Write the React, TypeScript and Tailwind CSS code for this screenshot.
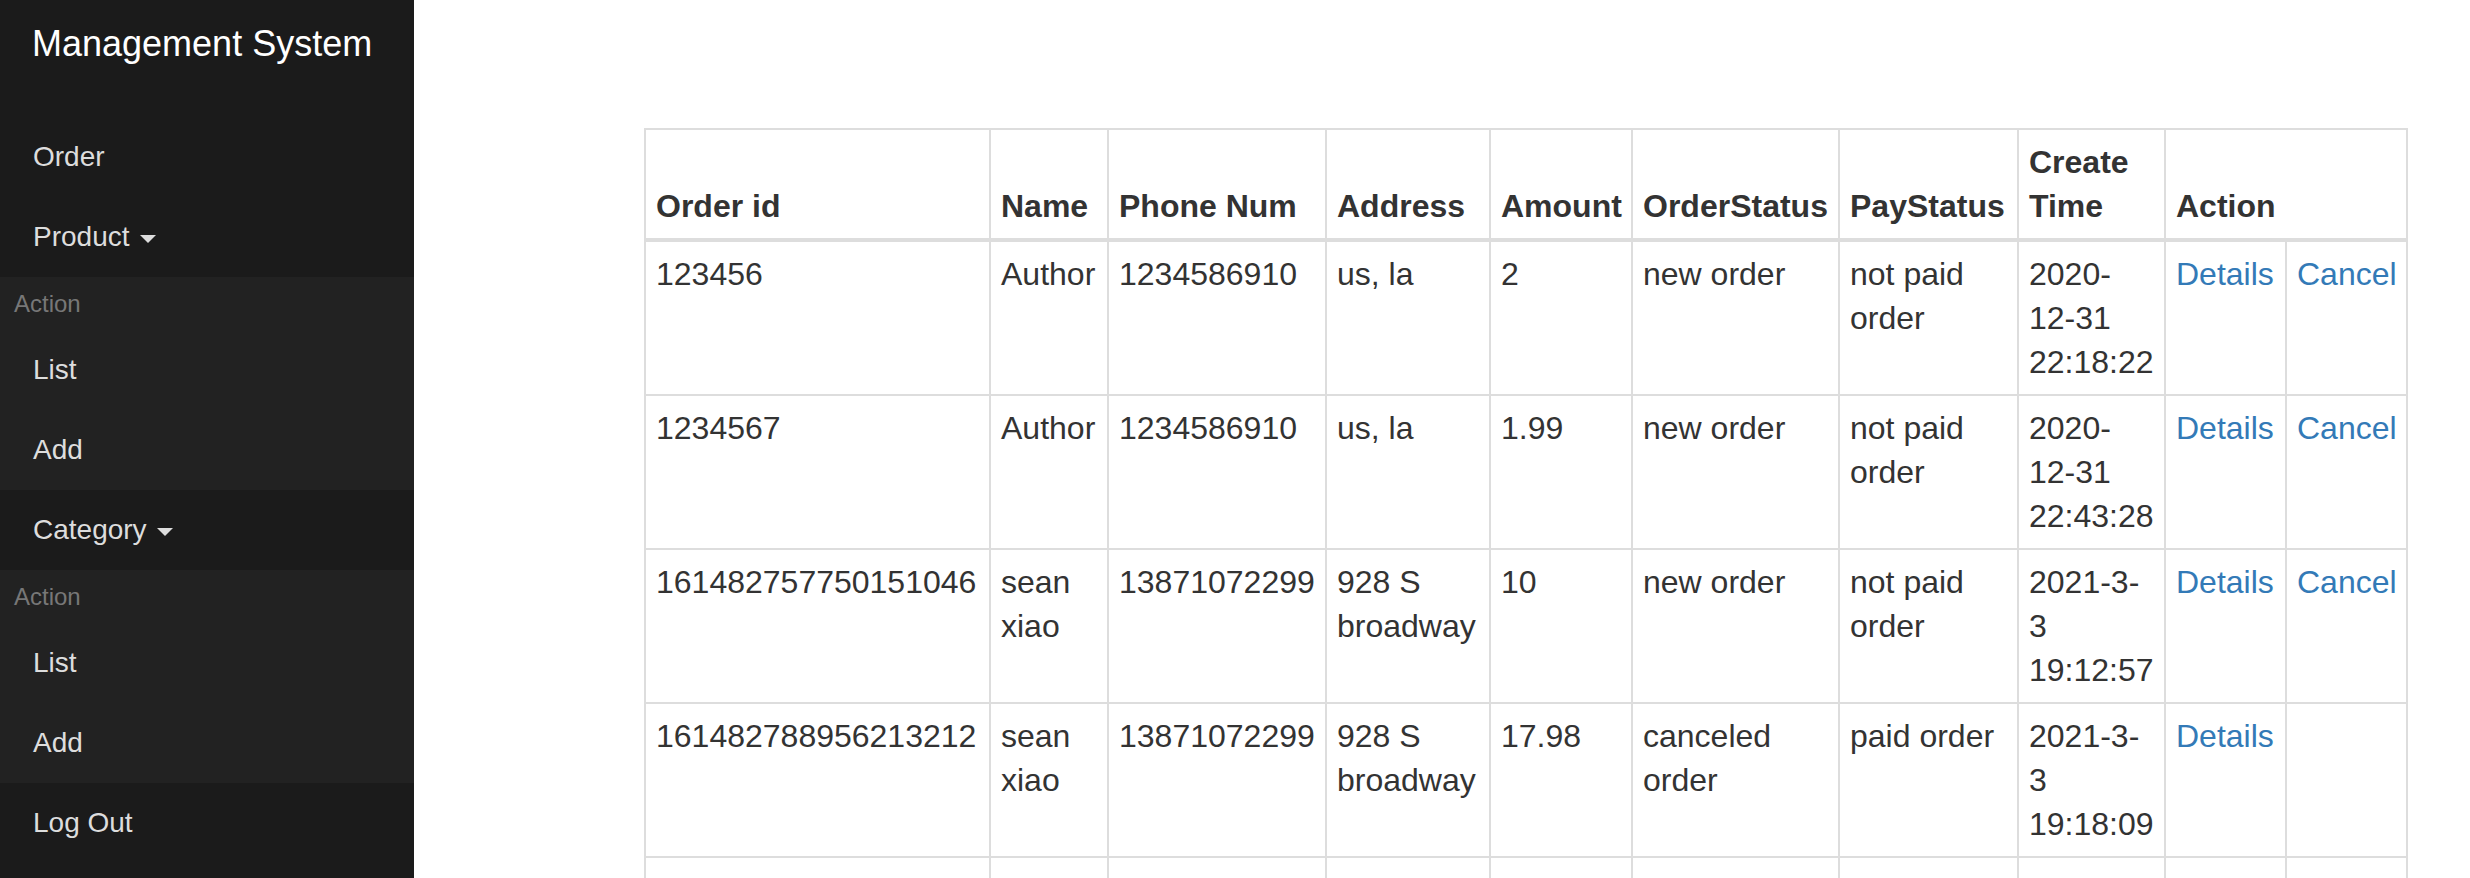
import React from "react";

type Order = {
  id: string;
  name: string;
  phone: string;
  address: string;
  amount: string;
  orderStatus: string;
  payStatus: string;
  time: string[];
  canCancel: boolean;
};

const orders: Order[] = [
  {
    id: "123456",
    name: "Author",
    phone: "1234586910",
    address: "us, la",
    amount: "2",
    orderStatus: "new order",
    payStatus: "not paid order",
    time: ["2020-", "12-31", "22:18:22"],
    canCancel: true,
  },
  {
    id: "1234567",
    name: "Author",
    phone: "1234586910",
    address: "us, la",
    amount: "1.99",
    orderStatus: "new order",
    payStatus: "not paid order",
    time: ["2020-", "12-31", "22:43:28"],
    canCancel: true,
  },
  {
    id: "161482757750151046",
    name: "sean xiao",
    phone: "13871072299",
    address: "928 S broadway",
    amount: "10",
    orderStatus: "new order",
    payStatus: "not paid order",
    time: ["2021-3-", "3", "19:12:57"],
    canCancel: true,
  },
  {
    id: "161482788956213212",
    name: "sean xiao",
    phone: "13871072299",
    address: "928 S broadway",
    amount: "17.98",
    orderStatus: "canceled order",
    payStatus: "paid order",
    time: ["2021-3-", "3", "19:18:09"],
    canCancel: false,
  },
  {
    id: "161482801270334518",
    name: "sean xiao",
    phone: "13871072299",
    address: "928 S broadway",
    amount: "8.99",
    orderStatus: "new order",
    payStatus: "not paid order",
    time: ["2021-3-", "3", "19:20:11"],
    canCancel: true,
  },
];

const colWidths = [345, 118, 218, 164, 142, 207, 179, 147, 121, 121];

function Caret() {
  return (
    <span className="ml-[10px] inline-block h-0 w-0 border-x-[8px] border-t-[8px] border-x-transparent border-t-[#dddddd] align-middle" />
  );
}

function NavItem({ children }: { children: React.ReactNode }) {
  return (
    <li>
      <a className="block py-[20px] pl-[33px] text-[28px] leading-[40px] text-[#dddddd]">
        {children}
      </a>
    </li>
  );
}

function Dropdown() {
  return (
    <ul className="bg-[#222222]">
      <li className="pb-[9px] pl-[14px] pt-[10px] text-[24px] leading-[34px] text-[#777777]">
        Action
      </li>
      <NavItem>List</NavItem>
      <NavItem>Add</NavItem>
    </ul>
  );
}

function Sidebar() {
  return (
    <aside className="h-full w-[414px] shrink-0 bg-[#1b1b1b]">
      <div className="h-[117px] pl-[32px] pt-[24px] text-[36px] leading-[40px] text-white">
        Management System
      </div>
      <ul>
        <NavItem>Order</NavItem>
        <NavItem>
          Product
          <Caret />
        </NavItem>
        <li>
          <Dropdown />
        </li>
        <NavItem>
          Category
          <Caret />
        </NavItem>
        <li>
          <Dropdown />
        </li>
        <NavItem>Log Out</NavItem>
      </ul>
    </aside>
  );
}

const th = "border-2 border-b-4 border-[#dddddd] px-[10px] py-[10px] text-left align-bottom font-bold";
const td = "border-2 border-[#dddddd] px-[10px] py-[10px] align-top";

export default function App() {
  return (
    <div className="flex h-[878px] overflow-hidden bg-white font-['Liberation_Sans',Arial,sans-serif]">
      <Sidebar />
      <main className="flex-1 pl-[230px] pt-[128px]">
        <table className="w-[1764px] table-fixed border-collapse text-[32px] leading-[44px] text-[#333333]">
          <colgroup>
            {colWidths.map((w, i) => (
              <col key={i} style={{ width: w }} />
            ))}
          </colgroup>
          <thead>
            <tr>
              <th className={th}>Order id</th>
              <th className={th}>Name</th>
              <th className={th}>Phone Num</th>
              <th className={th}>Address</th>
              <th className={th}>Amount</th>
              <th className={th}>OrderStatus</th>
              <th className={th}>PayStatus</th>
              <th className={th}>Create Time</th>
              <th className={th} colSpan={2}>
                Action
              </th>
            </tr>
          </thead>
          <tbody>
            {orders.map((o) => (
              <tr key={o.id}>
                <td className={td}>{o.id}</td>
                <td className={td}>{o.name}</td>
                <td className={td}>{o.phone}</td>
                <td className={td}>{o.address}</td>
                <td className={td}>{o.amount}</td>
                <td className={td}>{o.orderStatus}</td>
                <td className={td}>{o.payStatus}</td>
                <td className={td}>
                  {o.time.map((line, i) => (
                    <div key={i}>{line}</div>
                  ))}
                </td>
                <td className={td}>
                  <a className="text-[#337ab7]">Details</a>
                </td>
                <td className={td}>
                  {o.canCancel && <a className="text-[#337ab7]">Cancel</a>}
                </td>
              </tr>
            ))}
          </tbody>
        </table>
      </main>
    </div>
  );
}
